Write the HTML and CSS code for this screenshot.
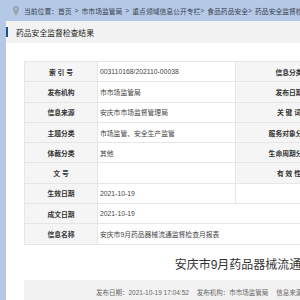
FILE: index.html
```html
<!DOCTYPE html>
<html lang="zh-CN">
<head>
    <meta charset="UTF-8">
    <meta name="viewport" content="width=device-width, initial-scale=1.0">
    <title>药品安全监督检查结果</title>
    <link rel="stylesheet" href="styles.css">
</head>
<body>
    <!-- Breadcrumb -->
    <div class="crumb">
        <svg class="pin" width="6" height="10" viewBox="0 0 6 10">
            <path d="M3 0C1.3 0 0 1.3 0 3c0 2.2 3 7 3 7s3-4.8 3-7C6 1.3 4.7 0 3 0z" fill="#9aa3ad"/>
            <circle cx="3" cy="3" r="1.1" fill="#b5c9e7"/>
        </svg>
        <span>当前位置：</span>
        <a href="#">首页</a><span class="sep">&gt;</span>
        <a href="#">市市场监管局</a><span class="sep">&gt;</span>
        <a href="#">重点领域信息公开专栏</a><span class="sep-r">&gt;</span>
        <a href="#">食品药品安全</a><span class="sep-r">&gt;</span>
        <a href="#">药品安全监督检查结果</a>
    </div>

    <!-- Content Panel -->
    <div class="panel">
        <div class="panel-head">
            <span class="bar"></span>
            <h2>药品安全监督检查结果</h2>
        </div>

        <table class="info-table">
            <colgroup>
                <col style="width:73px">
                <col style="width:138px">
                <col style="width:107px">
                <col style="width:194px">
            </colgroup>
            <tr>
                <th>索 引 号</th><td>003110168/202110-00038</td>
                <th>信息分类</th><td>市场监管</td>
            </tr>
            <tr>
                <th>发布机构</th><td>市市场监管局</td>
                <th>发布日期</th><td>2021-10-19</td>
            </tr>
            <tr>
                <th>信息来源</th><td>安庆市市场监督管理局</td>
                <th>关 键 词</th><td></td>
            </tr>
            <tr>
                <th>主题分类</th><td>市场监管、安全生产监管</td>
                <th>服务对象分类</th><td></td>
            </tr>
            <tr>
                <th>体裁分类</th><td>其他</td>
                <th>生命周期分类</th><td></td>
            </tr>
            <tr>
                <th>文 号</th><td></td>
                <th>有 效 性</th><td></td>
            </tr>
            <tr>
                <th>生效日期</th><td>2021-10-19</td>
                <td colspan="2"></td>
            </tr>
            <tr>
                <th>成文日期</th><td colspan="3">2021-10-19</td>
            </tr>
            <tr>
                <th>信息名称</th><td colspan="3">安庆市9月药品器械流通监督检查月报表</td>
            </tr>
        </table>

        <h1 class="doc-title">安庆市9月药品器械流通监督检查月报表</h1>

        <div class="doc-meta">
            <span>发布日期：2021-10-19 17:04:52</span>
            <span>发布机构：市市场监管局</span>
            <span>信息来源：安庆市市场监督管理局</span>
        </div>
    </div>
</body>
</html>
```

FILE: styles.css
```css
/* Reset */
* {
    margin: 0;
    padding: 0;
    box-sizing: border-box;
}

body {
    font-family: "Liberation Sans", "Noto Sans CJK SC", sans-serif;
    background-color: #b5c9e7;
    color: #333;
    overflow: hidden;
}

/* Breadcrumb */
.crumb {
    height: 21px;
    padding-left: 13px;
    display: flex;
    align-items: center;
    white-space: nowrap;
    font-size: 6.8px;
    color: #3a4250;
}

.crumb .pin {
    margin-right: 5px;
    flex: none;
}

.crumb a {
    color: #3a4250;
    text-decoration: none;
}

.crumb .sep {
    margin: 0 3px;
}

.crumb .sep-r {
    margin-right: 3px;
}

/* Panel */
.panel {
    margin-left: 6px;
    width: 560px;
    background-color: #fff;
    padding-bottom: 20px;
}

.panel-head {
    height: 22px;
    display: flex;
    align-items: center;
    background-color: #f2f2f2;
}

.panel-head .bar {
    width: 2px;
    height: 10px;
    background-color: #1d4f9c;
    margin-right: 8px;
}

.panel-head h2 {
    font-size: 7.8px;
    font-weight: normal;
    color: #222;
}

/* Info table */
.info-table {
    margin: 18px 0 0 18px;
    width: 512px;
    table-layout: fixed;
    border-collapse: collapse;
    font-size: 6.8px;
}

.info-table th,
.info-table td {
    height: 20.3px;
    border: 1px solid #e6e6e6;
    white-space: nowrap;
    overflow: hidden;
}

.info-table th {
    background-color: #f5f5f5;
    color: #333;
    font-weight: bold;
    text-align: center;
}

.info-table td {
    padding-left: 2px;
    color: #444;
    text-align: left;
}

/* Document title */
.doc-title {
    margin: 12px 0 0 18px;
    width: 512px;
    text-align: center;
    font-size: 12px;
    line-height: 16px;
    font-weight: normal;
    color: #333;
    white-space: nowrap;
}

.doc-meta {
    margin: 7px 0 0 18px;
    width: 512px;
    height: 24px;
    padding-left: 72px;
    background-color: #f2f2f2;
    display: flex;
    align-items: center;
    gap: 8px;
    font-size: 6.5px;
    color: #666;
    white-space: nowrap;
}
```
